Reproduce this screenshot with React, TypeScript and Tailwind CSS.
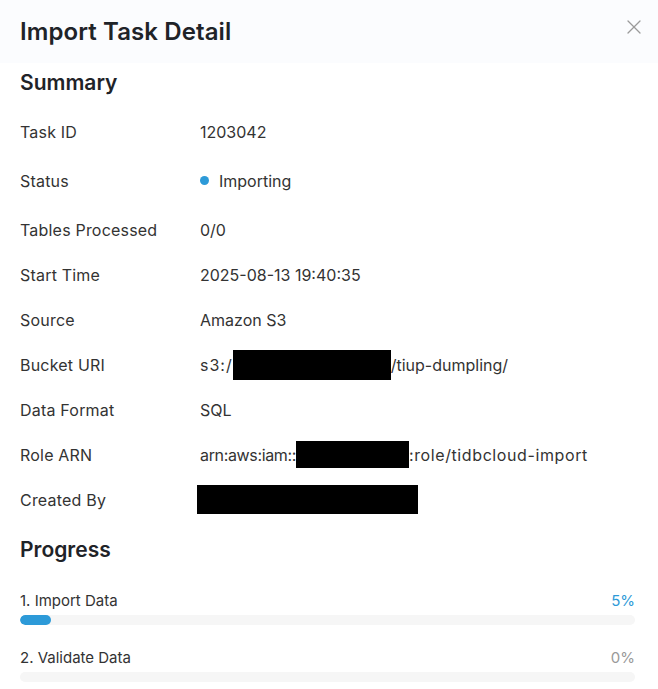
import { X } from 'lucide-react';

const font = { fontFamily: 'Inter, "Noto Sans", sans-serif' };

const Redacted = ({ w, h = 'h-[30px]' }: { w: string; h?: string }) => (
  <span className={`inline-block bg-black ${w} ${h} align-middle`} />
);

const rows: { label: string; value: React.ReactNode; tall?: boolean }[] = [
  { label: 'Task ID', value: '1203042' },
  {
    label: 'Status',
    tall: true,
    value: (
      <span className="flex items-center gap-2.5">
        <span className="w-[9px] h-[9px] rounded-full bg-[#2d9ad8]" />
        Importing
      </span>
    ),
  },
  { label: 'Tables Processed', value: '0/0' },
  { label: 'Start Time', value: '2025-08-13 19:40:35' },
  { label: 'Source', value: 'Amazon S3' },
  {
    label: 'Bucket URI',
    value: (
      <span className="flex items-center">
        <span className="tracking-[1px]">s3:/</span>
        <Redacted w="w-[158px]" />/tiup-dumpling/
      </span>
    ),
  },
  { label: 'Data Format', value: 'SQL' },
  {
    label: 'Role ARN',
    value: (
      <span className="flex items-center">
        <span className="tracking-[-0.35px]">arn:aws:iam::</span>
        <Redacted w="w-[113px]" h="h-[27px]" />
        <span className="tracking-[0.6px]">:role/tidbcloud-import</span>
      </span>
    ),
  },
  {
    label: 'Created By',
    value: (
      <span className="flex items-center -ml-[3px]">
        <Redacted w="w-[221px]" h="h-[29px]" />
      </span>
    ),
  },
];

const steps = [
  { label: '1. Import Data', pct: 5 },
  { label: '2. Validate Data', pct: 0 },
];

export default function App() {
  return (
    <div className="w-[658px] h-[689px] bg-white overflow-hidden text-[#333]" style={font}>
      {/* Header */}
      <div className="h-[63px] bg-[#fbfcfe] pl-5 pr-[12px] flex items-center justify-between">
        <h1 className="text-[24px] font-semibold text-[#1f2328] tracking-[0.1px]">Import Task Detail</h1>
        <X className="w-[24px] h-[24px] text-[#9a9a9a] mt-[-10px]" strokeWidth={1.3} />
      </div>

      <div className="pl-5 pr-[23px]">
        <h2 className="mt-[6px] text-[21px] leading-[28px] font-semibold text-[#1f2328]">Summary</h2>

        <div className="mt-3">
          {rows.map(r => (
            <div key={r.label} className={`flex items-center ${r.tall ? 'h-[53px]' : 'h-[45px]'} text-[16px]`}>
              <div className="w-[180px] text-[#333] tracking-[0.2px]">{r.label}</div>
              <div className="text-[#333]">{r.value}</div>
            </div>
          ))}
        </div>

        <h2 className="mt-[14px] text-[21px] leading-[28px] font-semibold text-[#1f2328]">Progress</h2>

        <div className="mt-[27px] space-y-[23px]">
          {steps.map(s => (
            <div key={s.label}>
              <div className="flex justify-between text-[15px] leading-[20px]">
                <span className="text-[#333]">{s.label}</span>
                <span className={s.pct > 0 ? 'text-[#2d9ad8]' : 'text-[#999]'}>{s.pct}%</span>
              </div>
              <div className="mt-1 h-[10px] rounded-full bg-[#f6f6f6] overflow-hidden">
                <div className="h-full rounded-full bg-[#2d9ad8]" style={{ width: `${s.pct}%` }} />
              </div>
            </div>
          ))}
        </div>
      </div>
    </div>
  );
}
